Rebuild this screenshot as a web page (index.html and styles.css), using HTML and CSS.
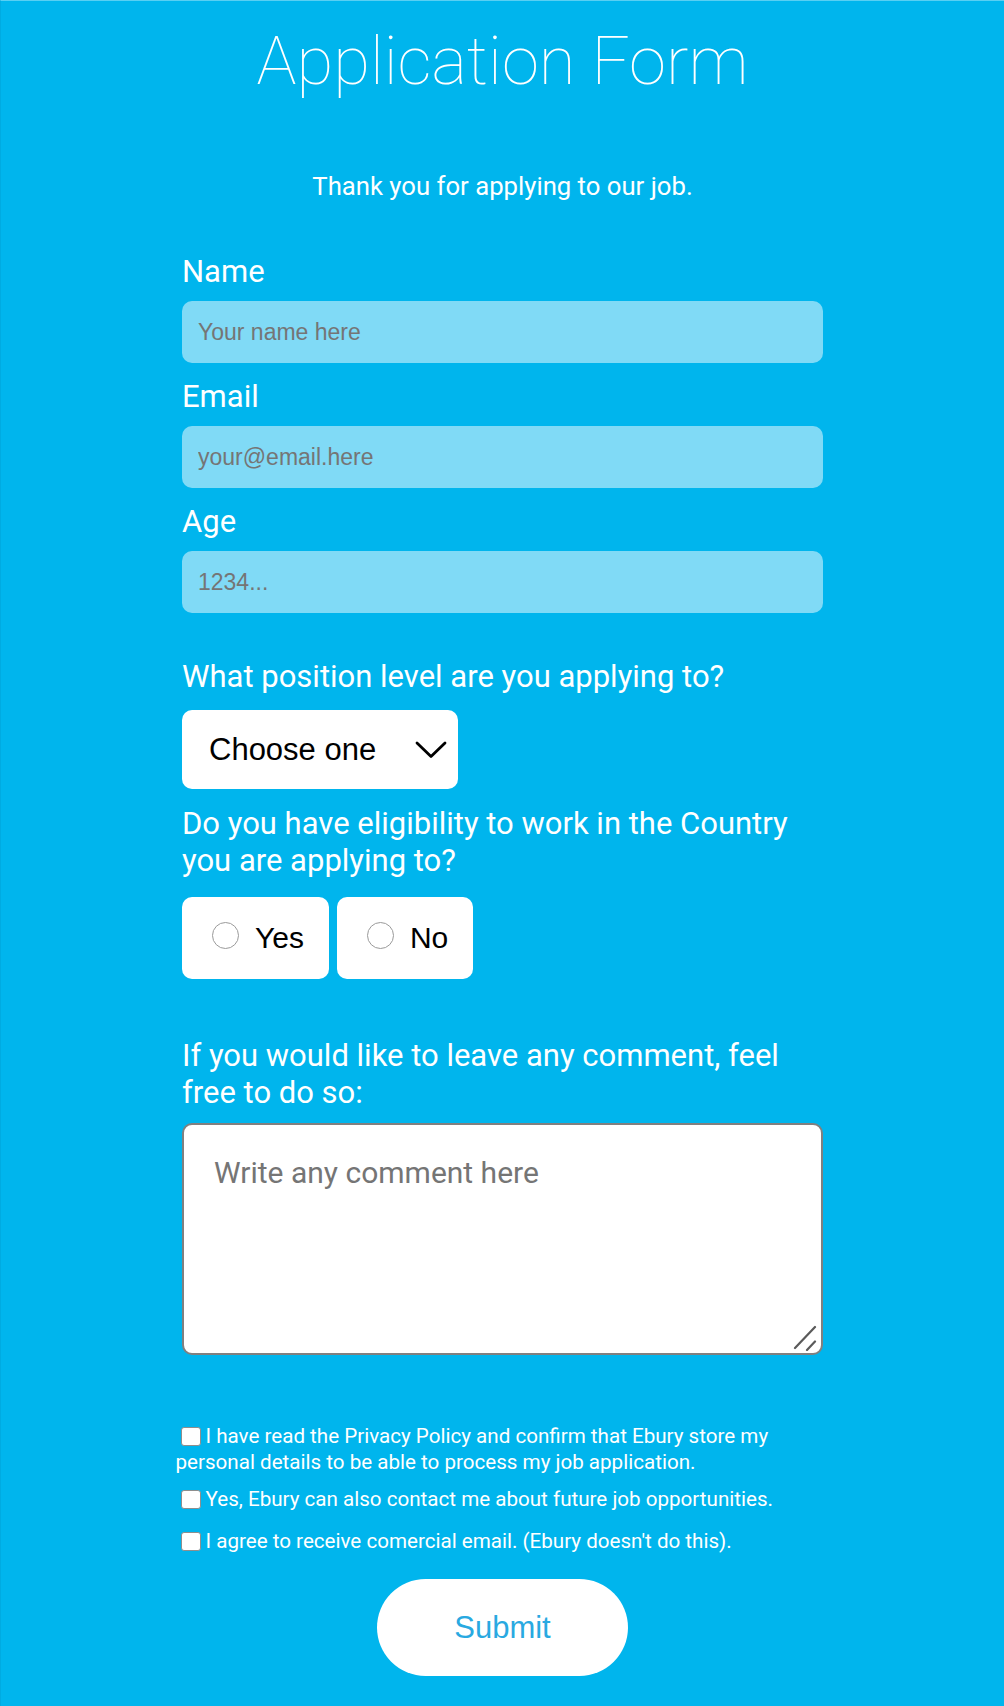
FILE: index.html
```html
<!DOCTYPE html>
<html lang="en">
<head>
<meta charset="utf-8">
<title>Application Form</title>
<link rel="stylesheet" href="styles.css">
</head>
<body>
<main class="page">
  <h1 class="title">Application Form</h1>
  <p class="intro">Thank you for applying to our job.</p>

  <form class="form">
    <label class="label" for="name">Name</label>
    <input class="field" id="name" type="text" placeholder="Your name here">

    <label class="label" for="email">Email</label>
    <input class="field" id="email" type="email" placeholder="your@email.here">

    <label class="label" for="age">Age</label>
    <input class="field" id="age" type="number" placeholder="1234...">

    <label class="label label-question" for="level">What position level are you applying to?</label>
    <span class="select-wrap">
      <select class="select" id="level">
        <option>Choose one</option>
        <option>Junior</option>
        <option>Mid</option>
        <option>Senior</option>
      </select>
      <svg class="chevron" width="32" height="18" viewBox="0 0 32 18" aria-hidden="true">
        <path d="M2 2 L16 15.5 L30 2" fill="none" stroke="#000" stroke-width="2.8" stroke-linecap="round" stroke-linejoin="round"/>
      </svg>
    </span>

    <p class="label label-eligibility">Do you have eligibility to work in the Country you are applying to?</p>
    <div class="radios">
      <label class="radio-option"><input class="radio" type="radio" name="eligible" value="yes">Yes</label>
      <label class="radio-option"><input class="radio" type="radio" name="eligible" value="no">No</label>
    </div>

    <label class="label label-comment" for="comment">If you would like to leave any comment, feel free to do so:</label>
    <span class="comment-wrap">
      <textarea class="comment" id="comment" placeholder="Write any comment here"></textarea>
      <svg class="grip" width="24" height="28" viewBox="0 0 24 28" aria-hidden="true">
        <path d="M2 25 L22 4 M14 27 L22 18.5" fill="none" stroke="#5a5a5a" stroke-width="2.2" stroke-linecap="round"/>
      </svg>
    </span>
  </form>

  <div class="consents">
    <p class="consent"><input class="check" type="checkbox">I have read the Privacy Policy and confirm that Ebury store my personal details to be able to process my job application.</p>
    <p class="consent consent-2"><input class="check" type="checkbox">Yes, Ebury can also contact me about future job opportunities.</p>
    <p class="consent consent-3"><input class="check" type="checkbox">I agree to receive comercial email. (Ebury doesn't do this).</p>
  </div>

  <button class="submit" type="submit">Submit</button>
</main>
</body>
</html>
```

FILE: styles.css
```css
* {
  box-sizing: border-box;
}

html, body {
  margin: 0;
  padding: 0;
}

body {
  background: #00b5ed;
  font-family: Roboto, "Liberation Sans", Arial, sans-serif;
  color: #fff;
}

.page {
  min-height: 1706px;
  border-top: 1px solid rgba(255, 255, 255, 0.35);
  border-left: 1px solid rgba(0, 60, 90, 0.08);
  padding-bottom: 31px;
}

.title {
  margin: 21px 0 0;
  text-align: center;
  font-family: Roboto, sans-serif;
  font-weight: 100;
  font-size: 67px;
  line-height: 78px;
  color: #fff;
}

.intro {
  margin: 73px 0 0;
  text-align: center;
  font-size: 25.7px;
  line-height: 26px;
  font-weight: 400;
}

.form {
  width: 641px;
  margin: 54px auto 0;
  display: flex;
  flex-direction: column;
  align-items: flex-start;
}

.label {
  display: block;
  margin: 0 0 11px;
  font-size: 31px;
  line-height: 37px;
  font-weight: 400;
  color: #fff;
}

.field {
  width: 100%;
  height: 62px;
  margin: 0 0 15px;
  padding: 0 16px;
  border: none;
  border-radius: 10px;
  background: rgba(255, 255, 255, 0.5);
  font-family: "Liberation Sans", Arial, sans-serif;
  font-size: 23px;
  color: #333;
  outline: none;
}

.field::placeholder {
  color: #757575;
}

.label-question {
  margin-top: 30px;
  margin-bottom: 15px;
}

.select-wrap {
  position: relative;
  display: block;
  width: 276px;
  height: 79px;
}

.select {
  appearance: none;
  -webkit-appearance: none;
  width: 276px;
  height: 79px;
  padding: 0 0 0 27px;
  border: none;
  border-radius: 10px;
  background: #fff;
  font-family: "Liberation Sans", Arial, sans-serif;
  font-size: 31px;
  color: #000;
  outline: none;
}

.chevron {
  position: absolute;
  right: 11px;
  top: 31px;
  pointer-events: none;
}

.label-eligibility {
  margin-top: 16px;
  margin-bottom: 18px;
}

.radios {
  display: flex;
  gap: 8px;
}

.radio-option {
  display: inline-flex;
  align-items: center;
  height: 82px;
  padding: 0 25px 0 30px;
  border-radius: 10px;
  background: #fff;
  font-family: "Liberation Sans", Arial, sans-serif;
  font-size: 30px;
  color: #000;
}

.radio {
  appearance: none;
  -webkit-appearance: none;
  width: 27px;
  height: 27px;
  margin: 0 16px 5px 0;
  border: 1.5px solid #9a9a9a;
  border-radius: 50%;
  background: #fff;
}

.label-comment {
  margin-top: 58px;
  margin-bottom: 12px;
}

.comment-wrap {
  position: relative;
  display: block;
  width: 100%;
  height: 232px;
}

.comment {
  display: block;
  width: 100%;
  height: 232px;
  padding: 30px;
  border: 2px solid #808080;
  border-radius: 10px;
  background: #fff;
  font-family: Roboto, sans-serif;
  font-size: 30px;
  color: #333;
  outline: none;
  resize: none;
}

.comment::placeholder {
  color: #757575;
}

.grip {
  position: absolute;
  right: 6px;
  bottom: 4px;
  pointer-events: none;
}

.consents {
  width: 654px;
  margin: 68px auto 0;
}

.consent {
  margin: 0;
  font-size: 20.6px;
  line-height: 26px;
  font-weight: 400;
  color: #fff;
}

.consent-2 {
  margin-top: 11px;
}

.consent-3 {
  margin-top: 16px;
}

.check {
  appearance: none;
  -webkit-appearance: none;
  width: 20px;
  height: 19px;
  margin: 0 5px 0 5px;
  vertical-align: -3px;
  border: 1px solid #8e8e8e;
  border-radius: 3px;
  background: #fff;
}

.submit {
  display: block;
  width: 251px;
  height: 97px;
  margin: 25px auto 0;
  border: none;
  border-radius: 49px;
  background: #fff;
  font-family: "Liberation Sans", Arial, sans-serif;
  font-size: 31px;
  color: #29a9e1;
  cursor: pointer;
}
```
